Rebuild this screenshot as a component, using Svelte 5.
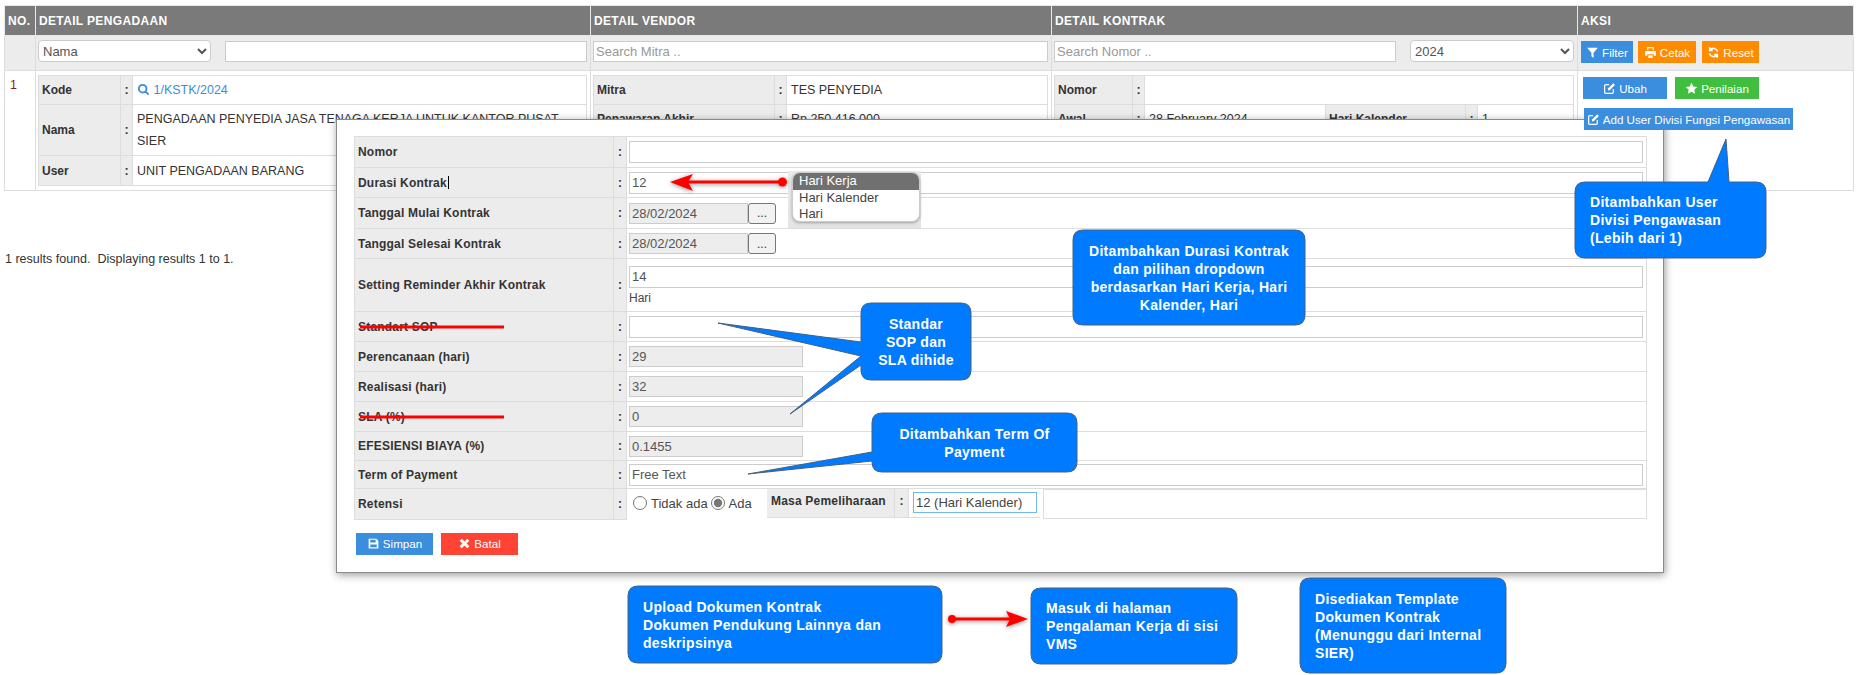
<script>
    const icons = {
        search: { s: "M10.5 3.5a7 7 0 1 0 0 14a7 7 0 0 0 0-14z M15.5 15.5l6 6", w: 3.5 },
        filter: { f: "M2 3h20l-8 9.5V22l-4-3v-6.5z" },
        print: { f: "M6 2h12v6h-2V4H8v4H6z M3 9h18a1 1 0 0 1 1 1v8h-4v-3H6v3H2v-8a1 1 0 0 1 1-1z M8 17h8v5H8z" },
        refresh: { s: "M19.5 10A8 8 0 0 0 5.5 7.5 M4.5 14a8 8 0 0 0 14 2.5 M5 2.5V8h5.5 M19 21.5V16h-5.5", w: 3 },
        edit: { s: "M11 5H5a2 2 0 0 0-2 2v12a2 2 0 0 0 2 2h12a2 2 0 0 0 2-2v-6", w: 2.2, f: "M9 15.5l.7-4L19 2.5l3 3-9.2 9.2z" },
        star: { f: "M12 1.5l3.2 6.8 7.4 1-5.4 5.1 1.4 7.4L12 18.2l-6.6 3.6 1.4-7.4L1.4 9.3l7.4-1z" },
        save: { f: "M3 3h14l4 4v14H3z M6 5v5h10V5z M6 14v5h12v-5z" },
        times: { s: "M5 5l14 14M19 5L5 19", w: 5.5 }
    };

    const formRows = [
        { label: "Nomor", kind: "text", value: "", size: "r31" },
        { label: "Durasi Kontrak", kind: "text", value: "12", caret: true },
        { label: "Tanggal Mulai Kontrak", kind: "date", value: "28/02/2024", size: "r31" },
        { label: "Tanggal Selesai Kontrak", kind: "date", value: "28/02/2024" },
        { label: "Setting Reminder Akhir Kontrak", kind: "reminder", value: "14", size: "tall" },
        { label: "Standart SOP", kind: "text", value: "" },
        { label: "Perencanaan (hari)", kind: "off", value: "29" },
        { label: "Realisasi (hari)", kind: "off", value: "32" },
        { label: "SLA (%)", kind: "off", value: "0" },
        { label: "EFESIENSI BIAYA (%)", kind: "off", value: "0.1455", size: "r29" },
        { label: "Term of Payment", kind: "text", value: "Free Text", size: "r28" }
    ];

    // rounded box, tails are inserted on the top or the left side
    function bubble(x, y, w, h, tails = []) {
        const r = 10;
        let d = `M${x + r} ${y}`;
        for (const t of tails.filter((t) => t.side === "top")) {
            d += `L${t.a} ${y}L${t.tip[0]} ${t.tip[1]}L${t.b} ${y}`;
        }
        d += `L${x + w - r} ${y}Q${x + w} ${y} ${x + w} ${y + r}L${x + w} ${y + h - r}`;
        d += `Q${x + w} ${y + h} ${x + w - r} ${y + h}L${x + r} ${y + h}Q${x} ${y + h} ${x} ${y + h - r}`;
        for (const t of tails.filter((t) => t.side === "left")) {
            d += `L${x} ${t.a}L${t.tip[0]} ${t.tip[1]}L${x} ${t.b}`;
        }
        d += `L${x} ${y + r}Q${x} ${y} ${x + r} ${y}Z`;
        return d;
    }

    const callouts = [
        {
            x: 1073, y: 230, w: 232, h: 95, center: true,
            lines: ["Ditambahkan Durasi Kontrak", "dan pilihan dropdown", "berdasarkan Hari Kerja, Hari", "Kalender, Hari"]
        },
        {
            x: 861, y: 303, w: 110, h: 77, center: true,
            lines: ["Standar", "SOP dan", "SLA dihide"],
            tails: [
                { side: "left", a: 365, tip: [790, 414], b: 356 },
                { side: "left", a: 356, tip: [718, 323], b: 342 }
            ]
        },
        {
            x: 872, y: 413, w: 205, h: 59, center: true,
            lines: ["Ditambahkan Term Of", "Payment"],
            tails: [{ side: "left", a: 461, tip: [748, 474], b: 452 }]
        },
        {
            x: 1575, y: 182, w: 191, h: 76, pad: 15,
            lines: ["Ditambahkan User", "Divisi Pengawasan", "(Lebih dari 1)"],
            tails: [{ side: "top", a: 1708, tip: [1726, 139], b: 1729 }]
        },
        {
            x: 628, y: 586, w: 314, h: 77, pad: 15,
            lines: ["Upload Dokumen Kontrak", "Dokumen Pendukung Lainnya dan", "deskripsinya"]
        },
        {
            x: 1031, y: 588, w: 206, h: 76, pad: 15,
            lines: ["Masuk di halaman", "Pengalaman Kerja di sisi", "VMS"]
        },
        {
            x: 1300, y: 578, w: 206, h: 95, pad: 15,
            lines: ["Disediakan Template", "Dokumen Kontrak", "(Menunggu dari Internal", "SIER)"]
        }
    ];
</script>

{#snippet icon(name)}
    <svg class="ico" viewBox="0 0 24 24" aria-hidden="true">
        {#if icons[name].f}
            <path d={icons[name].f} fill="currentColor" fill-rule="evenodd" />
        {/if}
        {#if icons[name].s}
            <path d={icons[name].s} fill="none" stroke="currentColor" stroke-width={icons[name].w} />
        {/if}
    </svg>
{/snippet}

<div class="page">
    <table class="grid">
        <colgroup>
            <col class="c-no" />
            <col class="c-peng" />
            <col class="c-vend" />
            <col class="c-kont" />
            <col class="c-aksi" />
        </colgroup>
        <thead>
            <tr class="head">
                <th>NO.</th>
                <th>DETAIL PENGADAAN</th>
                <th>DETAIL VENDOR</th>
                <th>DETAIL KONTRAK</th>
                <th>AKSI</th>
            </tr>
            <tr class="filters">
                <td></td>
                <td>
                    <div class="filter-line">
                        <select class="sel-nama"><option>Nama</option></select>
                        <input class="field" type="text" />
                    </div>
                </td>
                <td>
                    <div class="filter-line">
                        <input class="field" type="text" placeholder="Search Mitra .." />
                    </div>
                </td>
                <td>
                    <div class="filter-line">
                        <input class="field" type="text" placeholder="Search Nomor .." />
                        <select class="sel-year"><option>2024</option></select>
                    </div>
                </td>
                <td>
                    <div class="filter-btns">
                        <button class="btn blue w-filter">{@render icon("filter")} Filter</button>
                        <button class="btn orange w-cetak">{@render icon("print")} Cetak</button>
                        <button class="btn orange w-reset">{@render icon("refresh")} Reset</button>
                    </div>
                </td>
            </tr>
        </thead>
        <tbody>
            <tr class="body-row">
                <td class="no">1</td>
                <td>
                    <table class="detail peng">
                        <tbody>
                            <tr>
                                <th>Kode</th>
                                <td class="colon">:</td>
                                <td><span class="link">{@render icon("search")} 1/KSTK/2024</span></td>
                            </tr>
                            <tr>
                                <th>Nama</th>
                                <td class="colon">:</td>
                                <td class="long">PENGADAAN PENYEDIA JASA TENAGA KERJA UNTUK KANTOR PUSAT SIER</td>
                            </tr>
                            <tr class="r30">
                                <th>User</th>
                                <td class="colon">:</td>
                                <td>UNIT PENGADAAN BARANG</td>
                            </tr>
                        </tbody>
                    </table>
                </td>
                <td>
                    <table class="detail vend">
                        <tbody>
                            <tr>
                                <th>Mitra</th>
                                <td class="colon">:</td>
                                <td>TES PENYEDIA</td>
                            </tr>
                            <tr>
                                <th>Penawaran Akhir</th>
                                <td class="colon">:</td>
                                <td>Rp 250.416.000</td>
                            </tr>
                        </tbody>
                    </table>
                </td>
                <td>
                    <table class="detail kont">
                        <colgroup>
                            <col class="k-label" />
                            <col class="k-colon" />
                            <col class="k-val" />
                            <col class="k-label2" />
                            <col class="k-colon" />
                            <col />
                        </colgroup>
                        <tbody>
                            <tr>
                                <th>Nomor</th>
                                <td class="colon">:</td>
                                <td colspan="4"></td>
                            </tr>
                            <tr>
                                <th>Awal</th>
                                <td class="colon">:</td>
                                <td>28 February 2024</td>
                                <th>Hari Kalender</th>
                                <td class="colon">:</td>
                                <td>1</td>
                            </tr>
                        </tbody>
                    </table>
                </td>
                <td class="aksi">
                    <div class="aksi-line">
                        <button class="btn blue w-ubah">{@render icon("edit")} Ubah</button>
                        <button class="btn green w-ubah">{@render icon("star")} Penilaian</button>
                    </div>
                    <button class="btn blue add-user">{@render icon("edit")} Add User Divisi Fungsi Pengawasan</button>
                </td>
            </tr>
        </tbody>
    </table>

    <p class="results">1 results found.&nbsp; Displaying results 1 to 1.</p>

    <div class="modal">
        <table class="form">
            <colgroup>
                <col class="f-label" />
                <col class="f-colon" />
                <col />
            </colgroup>
            <tbody>
                {#each formRows as row}
                    <tr class={row.size ?? ""}>
                        <th>{row.label}{#if row.caret}<span class="caret"></span>{/if}</th>
                        <td class="colon">:</td>
                        <td class="value">
                            {#if row.kind === "date"}
                                <div class="date">
                                    <input class="field off" type="text" value={row.value} readonly />
                                    <button class="dots">...</button>
                                </div>
                            {:else if row.kind === "off"}
                                <input class="field off short" type="text" value={row.value} readonly />
                            {:else if row.kind === "reminder"}
                                <input class="field" type="text" value={row.value} />
                                <div class="unit">Hari</div>
                            {:else}
                                <input class="field" type="text" value={row.value} />
                            {/if}
                        </td>
                    </tr>
                {/each}
                <tr>
                    <th>Retensi</th>
                    <td class="colon">:</td>
                    <td class="split">
                        <div class="retensi">
                            <label class="radios">
                                <input type="radio" name="retensi" />
                                Tidak ada
                            </label>
                            <label class="radios">
                                <input type="radio" name="retensi" checked />
                                Ada
                            </label>
                        </div>
                        <div class="masa">
                            <div class="masa-label">Masa Pemeliharaan</div>
                            <div class="masa-colon">:</div>
                            <div class="masa-value"><input class="field focus" type="text" value="12 (Hari Kalender)" /></div>
                        </div>
                        <div class="blank"></div>
                    </td>
                </tr>
            </tbody>
        </table>
        <div class="form-btns">
            <button class="btn blue w-simpan">{@render icon("save")} Simpan</button>
            <button class="btn red w-simpan">{@render icon("times")} Batal</button>
        </div>
    </div>

    <div class="dropdown">
        <ul>
            <li class="active">Hari Kerja</li>
            <li>Hari Kalender</li>
            <li>Hari</li>
        </ul>
    </div>

    <svg class="overlay" viewBox="0 0 1856 675" aria-hidden="true">
        <defs>
            <filter id="soft" x="-20%" y="-100%" width="140%" height="300%">
                <feDropShadow dx="0" dy="1" stdDeviation="2" flood-color="#000" flood-opacity="0.45" />
            </filter>
        </defs>
        <path d="M360 327H504M360 417H504" stroke="#f00" stroke-width="3" />
        <g filter="url(#soft)" fill="#f00">
            <path d="M782 182H688" stroke="#f00" stroke-width="3" />
            <circle cx="782.5" cy="182" r="4.5" />
            <path d="M670 182L693 174L688 182L693 191Z" />
            <path d="M952 619H1010" stroke="#f00" stroke-width="3" />
            <circle cx="952" cy="619" r="4" />
            <path d="M1028 619L1006 611L1010 619L1006 627Z" />
        </g>
        {#each callouts as c}
            <path d={bubble(c.x, c.y, c.w, c.h, c.tails)} fill="#007bff" stroke="#44607f" stroke-width="1" />
        {/each}
    </svg>

    {#each callouts as c}
        <div
            class="note"
            class:center={c.center}
            style="left:{c.x}px;top:{c.y}px;width:{c.w}px;height:{c.h}px;padding-left:{c.pad ?? 0}px"
        >
            {#each c.lines as line}
                <div>{line}</div>
            {/each}
        </div>
    {/each}
</div>

<style>
    :global(body) {
        margin: 0;
        background: #fff;
    }

    .page {
        position: relative;
        width: 1856px;
        height: 675px;
        overflow: hidden;
        padding-top: 5px;
        box-sizing: border-box;
        font-family: "Liberation Sans", Arial, sans-serif;
        font-size: 12.5px;
        color: #333;
    }

    table {
        border-collapse: collapse;
        table-layout: fixed;
    }

    .grid {
        width: 1850px;
        margin-left: 4px;
    }

    .c-no {
        width: 31px;
    }
    .c-peng {
        width: 555px;
    }
    .c-vend {
        width: 461px;
    }
    .c-kont {
        width: 526px;
    }

    .grid > thead > tr > *,
    .grid > tbody > tr > td {
        border: 1px solid #ddd;
    }

    .head {
        height: 30px;
        background: #7a7a7a;
    }

    .head th {
        padding: 0 3px;
        color: #fff;
        font-size: 12px;
        text-align: left;
        font-weight: bold;
        letter-spacing: 0.35px;
        border-color: #e8e8e8 !important;
    }

    .filters {
        height: 35px;
        background: #ececec;
    }

    .filters td {
        padding: 4px 3px 0 2px;
        vertical-align: top;
    }

    .filter-line {
        display: flex;
        align-items: flex-start;
        gap: 14px;
    }

    .filter-btns {
        display: flex;
        gap: 5px;
        padding-top: 1px;
    }

    select {
        height: 22px;
        border: 1px solid #ccc;
        border-radius: 4px;
        background: #fff;
        font-family: inherit;
        font-size: 13px;
        color: #555;
        padding-left: 0;
        flex: none;
    }

    .sel-nama {
        width: 173px;
    }

    .sel-year {
        width: 164px;
    }

    .field {
        display: block;
        width: 100%;
        min-width: 0;
        height: 22px;
        box-sizing: border-box;
        padding: 0 2px;
        border: 1px solid #ccc;
        background: #fff;
        font-family: inherit;
        font-size: 13px;
        color: #555;
        outline: none;
    }

    .filter-line .field {
        margin-top: 1px;
        height: 21px;
    }

    .field::placeholder {
        color: #999;
    }

    .field.off {
        background: #ededed;
        width: 119px;
        height: 21px;
    }

    .field.short {
        width: 174px;
    }

    .field.focus {
        border-color: #72b8f2;
        height: 21px;
        color: #444;
    }

    .btn {
        display: inline-flex;
        align-items: center;
        justify-content: center;
        gap: 3px;
        height: 22px;
        padding: 0;
        border: 0;
        color: #fff;
        font-family: inherit;
        font-size: 11.6px;
        white-space: nowrap;
    }

    .blue {
        background: #3b8ddd;
    }
    .orange {
        background: #ff8c00;
    }
    .green {
        background: #3fbe3f;
    }
    .red {
        background: #ff4433;
    }

    .ico {
        width: 13px;
        height: 13px;
        flex: none;
    }

    .w-filter {
        width: 52px;
        margin-left: 1px;
    }
    .w-cetak {
        width: 58px;
    }
    .w-reset {
        width: 57px;
        margin-left: 1px;
    }
    .w-ubah {
        width: 84px;
    }
    .w-simpan {
        width: 77px;
    }

    .body-row {
        height: 120px;
    }

    .body-row > td {
        padding: 4px 3px 3px 2px;
        vertical-align: top;
    }

    .body-row > .no {
        padding: 7px 5px;
        color: #8a1c1c;
    }

    .detail {
        width: 100%;
    }

    .detail th,
    .detail td {
        height: 29px;
        box-sizing: border-box;
        border: 1px solid #ddd;
        padding: 4px;
        text-align: left;
    }

    .detail .r30 th,
    .detail .r30 td {
        height: 30px;
    }

    .detail th {
        background: #ececec;
        padding-left: 3px;
        font-size: 12px;
        font-weight: bold;
    }

    .detail .colon {
        background: #ececec;
        font-weight: bold;
        text-align: center;
        padding: 0;
    }

    .peng th:first-child {
        width: 82px;
    }
    .vend th:first-child {
        width: 181px;
    }
    .peng .colon,
    .vend .colon {
        width: 12px;
    }

    .k-label {
        width: 78px;
    }
    .k-colon {
        width: 12px;
    }
    .k-val {
        width: 181px;
    }
    .k-label2 {
        width: 140px;
    }

    .long {
        line-height: 22px;
        padding: 3px 4px !important;
    }

    .link {
        color: #3b8ddd;
    }

    .link .ico {
        vertical-align: -2px;
    }

    .aksi {
        padding: 6px 5px 0 !important;
    }

    .aksi-line {
        display: flex;
        gap: 8px;
    }

    .add-user {
        position: relative;
        z-index: 2;
        width: 209px;
        margin: 9px 0 0 1px;
    }

    .results {
        margin: 61px 0 0 5px;
    }

    .modal {
        position: absolute;
        left: 336px;
        top: 119px;
        width: 1328px;
        height: 454px;
        box-sizing: border-box;
        padding: 16px 17px;
        background: #fff;
        border: 1px solid #8a8a8a;
        box-shadow: 1px 2px 8px rgba(0, 0, 0, 0.4);
    }

    .form {
        width: 1293px;
        font-size: 12px;
    }

    .f-label {
        width: 259px;
    }
    .f-colon {
        width: 13px;
    }

    .form tr {
        height: 30px;
    }

    .form tr.tall {
        height: 53px;
    }
    .form tr.r31 {
        height: 31px;
    }
    .form tr.r29 {
        height: 29px;
    }
    .form tr.r28 {
        height: 28px;
    }

    .form th,
    .form td {
        border: 1px solid #ddd;
        padding: 0;
    }

    .form th {
        background: #ececec;
        padding-left: 3px;
        text-align: left;
        font-weight: bold;
        letter-spacing: 0.2px;
    }

    .form .colon {
        background: #ececec;
        border-color: #ddd;
        text-align: center;
        font-weight: bold;
    }

    .form .value {
        padding: 0 3px 0 2px;
    }

    .caret {
        display: inline-block;
        width: 1px;
        height: 13px;
        margin-left: 1px;
        background: #000;
        vertical-align: -2px;
    }

    .unit {
        margin-top: 3px;
        height: 14px;
        color: #444;
    }

    .date {
        display: flex;
        align-items: center;
    }

    .dots {
        width: 28px;
        height: 21px;
        padding: 0;
        border: 1px solid #777;
        border-radius: 3px;
        background: #f2f2f2;
        font-family: inherit;
        font-size: 12px;
        color: #333;
    }

    .form .split {
        padding: 0;
        height: 30px;
    }

    .split {
        display: flex;
        border: 0 !important;
        height: 30px;
    }

    .retensi {
        display: flex;
        align-items: center;
        gap: 3px;
        width: 140px;
        padding: 0 0 2px 6px;
        box-sizing: border-box;
        flex: none;
        font-size: 13px;
        color: #444;
    }

    .radios {
        display: flex;
        align-items: center;
        gap: 4px;
        white-space: nowrap;
    }

    .radios input {
        width: 14px;
        height: 14px;
        margin: 0;
        accent-color: #777;
    }

    .masa {
        display: flex;
        width: 273px;
        height: 28px;
        flex: none;
        border-bottom: 1px solid #ddd;
    }

    .masa-label {
        width: 127px;
        padding-left: 4px;
        box-sizing: border-box;
        line-height: 25px;
        background: #ececec;
        font-weight: bold;
        letter-spacing: 0.2px;
        white-space: nowrap;
    }

    .masa-colon {
        width: 13px;
        line-height: 25px;
        text-align: center;
        font-weight: bold;
        background: #ececec;
        border-left: 1px solid #ddd;
        border-right: 1px solid #ddd;
    }

    .masa-value {
        flex: 1;
        padding: 3px 3px 0 4px;
    }

    .blank {
        flex: 1;
        margin-left: 3px;
        border: 1px solid #ddd;
        border-bottom-width: 1px;
    }

    .form-btns {
        display: flex;
        gap: 8px;
        margin: 13px 0 0 2px;
    }

    .dropdown {
        position: absolute;
        left: 788px;
        top: 171px;
        width: 133px;
        height: 57px;
        padding: 1px 1px 0 4px;
        box-sizing: border-box;
        background: linear-gradient(#ececec, #e4e4e4);
        z-index: 3;
    }

    .dropdown ul {
        list-style: none;
        margin: 0;
        padding: 0;
        width: 128px;
        height: 50px;
        background: #fff;
        border: 1px solid #ccc;
        border-radius: 8px;
        box-sizing: border-box;
        overflow: hidden;
        box-shadow: 0 1px 3px rgba(0, 0, 0, 0.3);
        font-size: 13px;
        line-height: 16px;
        color: #444;
    }

    .dropdown li {
        padding-left: 6px;
    }

    .dropdown .active {
        height: 17px;
        background: #707070;
        color: #fff;
    }

    .overlay {
        position: absolute;
        left: 0;
        top: 0;
        width: 1856px;
        height: 675px;
        z-index: 4;
        pointer-events: none;
    }

    .note {
        position: absolute;
        z-index: 5;
        box-sizing: border-box;
        display: flex;
        flex-direction: column;
        justify-content: center;
        color: #fff;
        font-weight: bold;
        font-size: 14px;
        line-height: 18px;
        letter-spacing: 0.3px;
    }

    .note.center {
        text-align: center;
    }
</style>
